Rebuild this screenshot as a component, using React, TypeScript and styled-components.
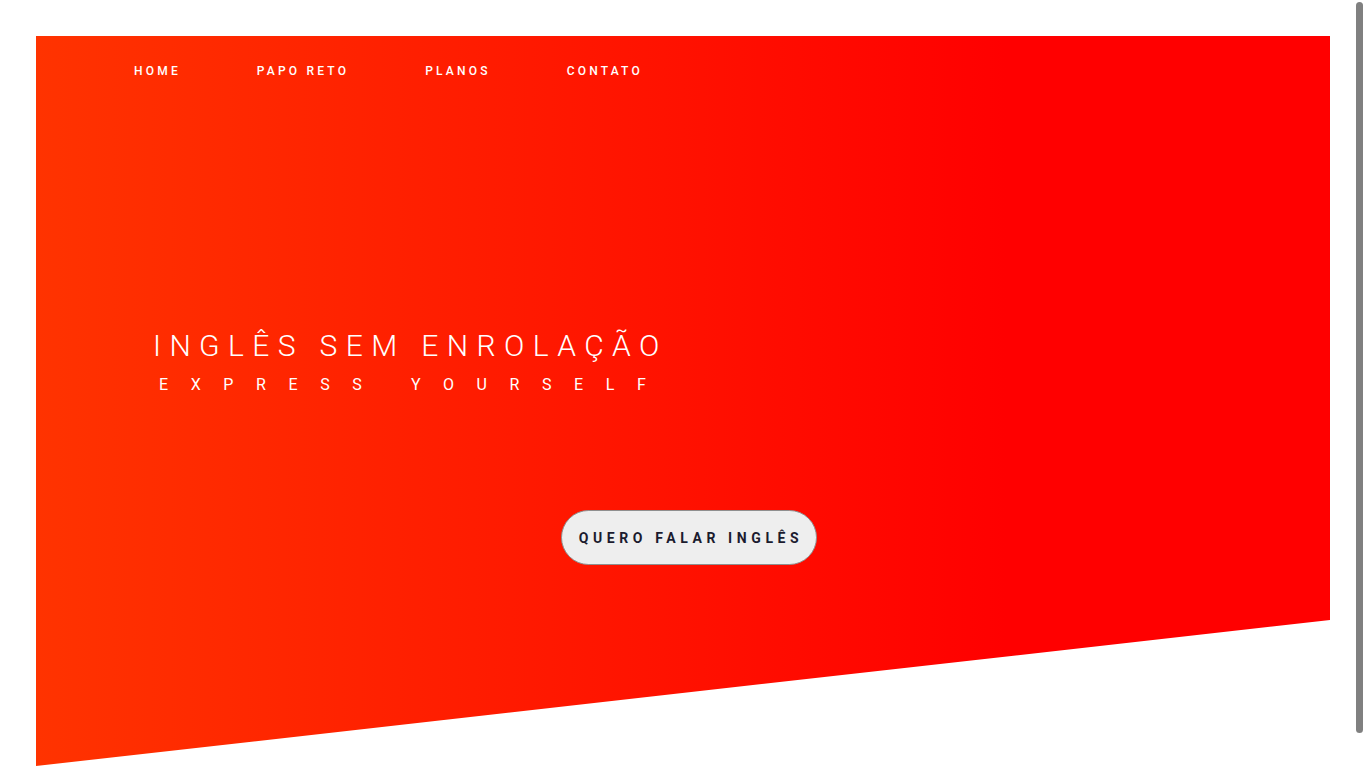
import React from "react";
import styled, { createGlobalStyle } from "styled-components";

const Global = createGlobalStyle`
  html, body {
    margin: 0;
    padding: 0;
    background: #ffffff;
    overflow: hidden;
    scrollbar-width: none;
  }
  html::-webkit-scrollbar, body::-webkit-scrollbar { display: none; }
  * { box-sizing: border-box; }
`;

const Page = styled.div`
  padding: 36px 36px 0 36px;
  font-family: Roboto, "Noto Sans", Arial, sans-serif;
`;

const Hero = styled.section`
  height: 730px;
  background: linear-gradient(to right, #ff3300 0%, #ff0000 75%);
  clip-path: polygon(0 0, 100% 0, 100% 80%, 0 100%);
  display: flex;
  flex-direction: column;
`;

const Nav = styled.nav`
  height: 70px;
  display: flex;
  align-items: center;
  gap: 76px;
  padding-left: 98px;
`;

const NavLink = styled.a`
  color: #ffffff;
  font-size: 12px;
  font-weight: 500;
  letter-spacing: 3.2px;
  text-decoration: none;
  text-transform: uppercase;
`;

const TitleBlock = styled.div`
  align-self: flex-start;
  margin: 225px 0 0 117px;
  color: #ffffff;
  white-space: nowrap;
`;

const Title = styled.h1`
  margin: 0;
  font-size: 30px;
  line-height: 30px;
  font-weight: 300;
  letter-spacing: 8.4px;
`;

const Subtitle = styled.p`
  margin: 16px 0 0 0;
  padding-left: 6px;
  font-size: 16px;
  line-height: 16px;
  font-weight: 400;
  letter-spacing: 22.6px;
`;

const Cta = styled.button`
  align-self: flex-start;
  margin: 117px 0 0 525px;
  width: 256px;
  height: 55px;
  padding: 0 0 0 4px;
  border-radius: 28px;
  border: 1px solid #8f8f8f;
  background: #eeeeee;
  color: #1b1b2e;
  font-family: Roboto, "Noto Sans", Arial, sans-serif;
  font-size: 14px;
  font-weight: 700;
  letter-spacing: 4.6px;
  cursor: pointer;
`;

const ScrollThumb = styled.div`
  position: fixed;
  top: 2px;
  right: 3px;
  width: 7px;
  height: 731px;
  border-radius: 4px;
  background: #808080;
`;

export default function App() {
  return (
    <>
      <Global />
      <Page>
        <Hero>
          <Nav>
            <NavLink href="#">Home</NavLink>
            <NavLink href="#">Papo Reto</NavLink>
            <NavLink href="#">Planos</NavLink>
            <NavLink href="#">Contato</NavLink>
          </Nav>
          <TitleBlock>
            <Title>INGLÊS SEM ENROLAÇÃO</Title>
            <Subtitle>EXPRESS YOURSELF</Subtitle>
          </TitleBlock>
          <Cta>QUERO FALAR INGLÊS</Cta>
        </Hero>
      </Page>
      <ScrollThumb />
    </>
  );
}
